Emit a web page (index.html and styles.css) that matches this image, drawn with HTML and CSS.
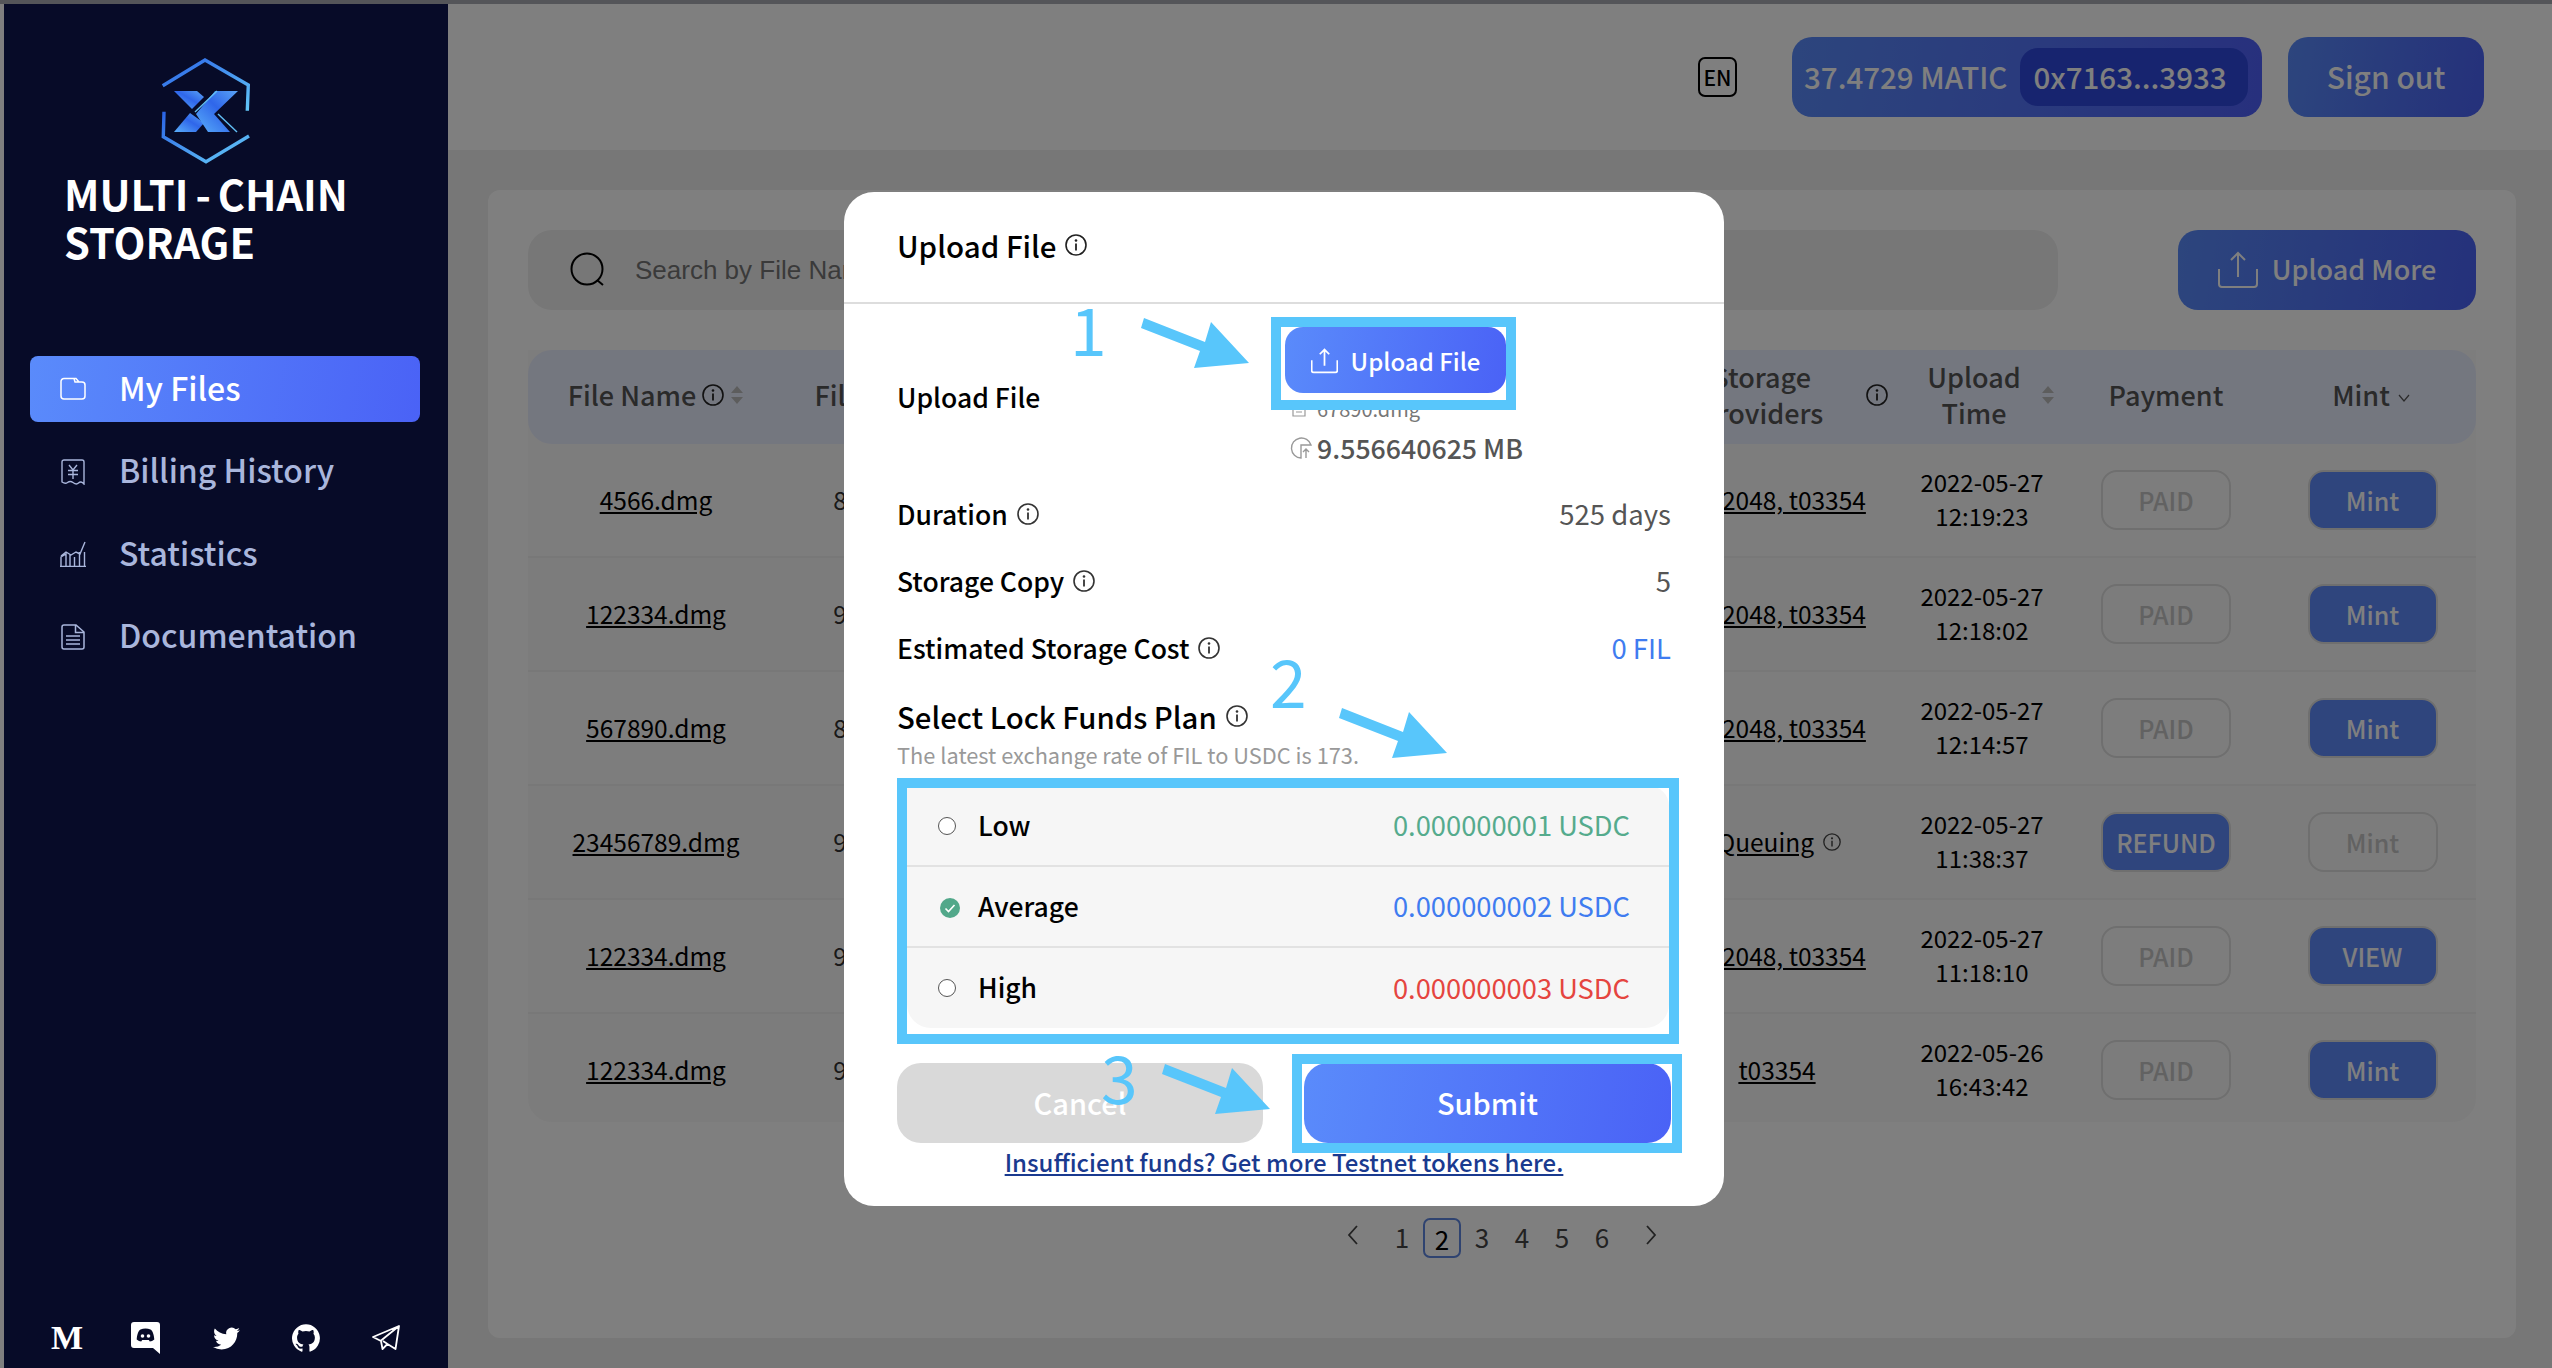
FILE: index.html
```html
<!DOCTYPE html>
<html lang="en">
<head>
<meta charset="utf-8">
<title>Multi-Chain Storage</title>
<link rel="stylesheet" href="styles.css">
</head>
<body>
<div class="topstrip"></div>
<div class="app">
  <aside class="sidebar">
    <div class="brand">
      <svg class="logo" viewBox="0 0 90 108" aria-hidden="true">
        <defs>
          <linearGradient id="lg1" x1="0" y1="0" x2="1" y2="1"><stop offset="0" stop-color="#2a63e6"/><stop offset="1" stop-color="#62c6f8"/></linearGradient>
          <linearGradient id="lg2" x1="0" y1="0" x2="1" y2="1"><stop offset="0" stop-color="#2a63e6"/><stop offset="1" stop-color="#66cdf8"/></linearGradient>
          <linearGradient id="lg3" x1="0" y1="1" x2="1" y2="0"><stop offset="0" stop-color="#5bb0fa"/><stop offset=".55" stop-color="#2f66ea"/><stop offset="1" stop-color="#5aa4f6"/></linearGradient>
        </defs>
        <polyline points="1.7,27.7 44,2 87.3,27 86.3,52.7" fill="none" stroke="url(#lg1)" stroke-width="3.4"/>
        <polyline points="3,53.7 2.3,78.7 45,103.7 88,78" fill="none" stroke="url(#lg2)" stroke-width="3.4"/>
        <g fill="url(#lg3)">
          <polygon points="13,33 36,33 43,39 31,51"/>
          <polygon points="13,74 35,74 43,65 29,55"/>
          <polygon points="54,33 77,33 53,56 69,74 47,74 35,56"/>
        </g>
        <g fill="none" stroke="#62bff5" stroke-width="1.4">
          <line x1="56" y1="33" x2="34" y2="54"/>
          <line x1="57" y1="56" x2="76" y2="74"/>
        </g>
      </svg>
      <div class="brand-name">MULTI<span class="dash">-</span>CHAIN<br>STORAGE</div>
    </div>
    <nav class="nav">
      <a class="nav-item active">
        <svg class="nav-ico" viewBox="0 0 26 26" fill="none" stroke="currentColor" stroke-width="1.5"><path d="M1 5.5a3 3 0 0 1 3-3h12l3 3.5h3a3 3 0 0 1 3 3v11a3 3 0 0 1-3 3H4a3 3 0 0 1-3-3zM14 2.5l1 3.5h7"/></svg>
        <span>My Files</span>
      </a>
      <a class="nav-item">
        <svg class="nav-ico" viewBox="0 0 26 26" fill="none" stroke="currentColor" stroke-width="1.4"><path d="M2 3a2 2 0 0 1 2-2h18a2 2 0 0 1 2 2v22c-2-2.500-4-2.500-5.500-1s-3.500 1-5.500-.5-3.500-1.500-5.500 0-4 .5-5.500-.5z"/><path d="M9 6l4 5 4-5M8 11.500h10M8 15.500h10M13 11v9"/></svg>
        <span>Billing History</span>
      </a>
      <a class="nav-item">
        <svg class="nav-ico" viewBox="0 0 26 26" fill="none" stroke="currentColor" stroke-width="1.4"><path d="M0 25.500h26M1 25v-9l5-3v12M10 25v-12M14.500 25v-9M19.500 25v-14M24.500 25v-14M1 15l5-4 5 3 5-3 4 2 5-12"/></svg>
        <span>Statistics</span>
      </a>
      <a class="nav-item">
        <svg class="nav-ico" viewBox="0 0 26 26" fill="none" stroke="currentColor" stroke-width="1.5"><path d="M2 3a2 2 0 0 1 2-2h12l8 7v15a2 2 0 0 1-2 2H4a2 2 0 0 1-2-2zM15.500 1v7.500H24M6 12h14M6 16h14M6 20h14"/></svg>
        <span>Documentation</span>
      </a>
    </nav>
    <div class="socials">
      <span class="medium">M</span>
      <svg class="soc-discord" viewBox="0 0 29 32"><path fill="#fff" d="M3 0h23a3 3 0 0 1 3 3v29l-7-6H3a3 3 0 0 1-3-3V3a3 3 0 0 1 3-3z"/><path fill="#070b28" d="M9.500 7.500c3-1.200 7-1.200 10 0 2 1 3.500 5 3.800 10-1.500 1.300-3 1.800-4.500 2l-1-1.500H11.200l-1 1.500c-1.500-.2-3-.7-4.500-2 .3-5 1.800-9 3.800-10z"/><circle cx="11.500" cy="14" r="1.800" fill="#fff"/><circle cx="17.500" cy="14" r="1.800" fill="#fff"/></svg>
      <svg class="soc-twitter" viewBox="0 0 24 24"><path fill="#fff" d="M23.950 4.570a10 10 0 0 1-2.820.78 4.960 4.960 0 0 0 2.160-2.720c-.95.550-2 .950-3.120 1.180a4.920 4.920 0 0 0-8.380 4.480C7.690 8.100 4.070 6.130 1.640 3.160a4.820 4.820 0 0 0-.67 2.480c0 1.710.87 3.210 2.190 4.100a4.900 4.900 0 0 1-2.230-.61v.06c0 2.390 1.700 4.380 3.950 4.830a5 5 0 0 1-2.210.08 4.940 4.940 0 0 0 4.600 3.420A9.870 9.870 0 0 1 0 19.540a14 14 0 0 0 7.560 2.210c9.050 0 14-7.500 14-13.980 0-.21 0-.42-.02-.63a9.940 9.940 0 0 0 2.410-2.570z"/></svg>
      <svg class="soc-github" viewBox="0 0 24 24"><path fill="#fff" d="M12 .3a12 12 0 0 0-3.800 23.380c.6.120.83-.26.83-.57L9 21.070c-3.340.72-4.040-1.610-4.040-1.610-.55-1.390-1.340-1.760-1.340-1.760-1.080-.74.09-.73.09-.73 1.200.09 1.840 1.240 1.840 1.240 1.070 1.830 2.800 1.300 3.490 1 .1-.78.42-1.310.76-1.610-2.670-.3-5.470-1.330-5.470-5.930 0-1.310.47-2.380 1.240-3.220-.14-.3-.54-1.520.1-3.180 0 0 1-.32 3.300 1.230a11.500 11.500 0 0 1 6 0c2.280-1.550 3.290-1.230 3.290-1.230.64 1.660.24 2.880.12 3.180a4.650 4.650 0 0 1 1.230 3.220c0 4.610-2.800 5.630-5.480 5.920.42.36.81 1.100.81 2.220l-.01 3.290c0 .31.2.69.82.57A12 12 0 0 0 12 .3z"/></svg>
      <svg class="soc-telegram" viewBox="0 0 28 26" fill="none" stroke="#fff" stroke-width="1.800" stroke-linejoin="round"><path d="M1 12L27 1l-3.500 23-8-5-5 5-1.500-8zM8.500 16L27 1M15.500 19L11 16"/></svg>
    </div>
  </aside>

  <main class="main">
    <header class="topbar">
      <span class="lang">EN</span>
      <div class="wallet"><span class="balance">37.4729 MATIC</span><span class="address">0x7163...3933</span></div>
      <button class="btn signout">Sign out</button>
    </header>
    <section class="card">
      <div class="toolbar">
        <div class="search">
          <svg class="search-ico" viewBox="0 0 36 36" fill="none" stroke="#000" stroke-width="2"><circle cx="17" cy="17" r="15.500"/><path d="M27 28l6 5"/></svg>
          <span class="placeholder">Search by File Name</span>
        </div>
        <button class="btn upload-more">
          <svg class="upload-ico-lg" viewBox="0 0 40 38" fill="none" stroke="currentColor" stroke-width="2"><path d="M20 26V2M13 9l7-7 7 7M1 18v15a3 3 0 0 0 3 3h32a3 3 0 0 0 3-3V18"/></svg>
          Upload More
        </button>
      </div>
      <div class="table">
        <div class="thead">
          <div class="th"><span>File Name</span><svg class="info" viewBox="0 0 22 22"><use href="#i-info"/></svg><svg class="sort" viewBox="0 0 14 20"><use href="#i-sort"/></svg></div>
          <div class="th th-size">File Size</div>
          <div class="th"></div>
          <div class="th th-providers"><span>Storage<br>Providers</span><svg class="info" viewBox="0 0 22 22"><use href="#i-info"/></svg></div>
          <div class="th th-time"><span>Upload<br>Time</span><svg class="sort" viewBox="0 0 14 20"><use href="#i-sort"/></svg></div>
          <div class="th">Payment</div>
          <div class="th th-mint">Mint<svg class="caret" viewBox="0 0 12 8" fill="none" stroke="currentColor" stroke-width="1.200"><path d="M1 1l5 6 5-6"/></svg></div>
        </div>
        <div class="row"><a class="name">4566.dmg</a><span class="size">8.3 MB</span><span></span><a class="prov long">t02048, t03354</a><span class="time">2022-05-27<br>12:19:23</span><span class="act off">PAID</span><span class="act on last">Mint</span></div>
        <div class="row"><a class="name">122334.dmg</a><span class="size">9.5 MB</span><span></span><a class="prov long">t02048, t03354</a><span class="time">2022-05-27<br>12:18:02</span><span class="act off">PAID</span><span class="act on last">Mint</span></div>
        <div class="row"><a class="name">567890.dmg</a><span class="size">8.3 MB</span><span></span><a class="prov long">t02048, t03354</a><span class="time">2022-05-27<br>12:14:57</span><span class="act off">PAID</span><span class="act on last">Mint</span></div>
        <div class="row"><a class="name">23456789.dmg</a><span class="size">9.5 MB</span><span></span><div class="queue"><a class="prov">Queuing</a><svg class="info-sm" viewBox="0 0 22 22"><use href="#i-info"/></svg></div><span class="time">2022-05-27<br>11:38:37</span><span class="act on">REFUND</span><span class="act off last">Mint</span></div>
        <div class="row"><a class="name">122334.dmg</a><span class="size">9.5 MB</span><span></span><a class="prov long">t02048, t03354</a><span class="time">2022-05-27<br>11:18:10</span><span class="act off">PAID</span><span class="act on last">VIEW</span></div>
        <div class="row"><a class="name">122334.dmg</a><span class="size">9.5 MB</span><span></span><a class="prov">t03354</a><span class="time">2022-05-26<br>16:43:42</span><span class="act off">PAID</span><span class="act on last">Mint</span></div>
      </div>
      <div class="pager">
        <svg class="chev chev-l" viewBox="0 0 12 20" fill="none" stroke="currentColor" stroke-width="1.800"><path d="M10 1L2 10l8 9"/></svg>
        <span class="pg">1</span><span class="pg cur">2</span><span class="pg">3</span><span class="pg">4</span><span class="pg">5</span><span class="pg">6</span>
        <svg class="chev chev-r" viewBox="0 0 12 20" fill="none" stroke="currentColor" stroke-width="1.800"><path d="M2 1l8 9-8 9"/></svg>
      </div>
    </section>
  </main>
</div>

<div class="overlay"></div>

<div class="modal">
  <div class="modal-head"><span>Upload File</span><svg class="info" viewBox="0 0 22 22"><use href="#i-info"/></svg></div>
  <div class="modal-body">
    <div class="upload-row">
      <div class="label upload-label">Upload File</div>
      <div class="upload-col">
        <button class="btn upload-btn">
          <svg class="upload-ico" viewBox="0 0 40 38" fill="none" stroke="currentColor" stroke-width="2.600"><path d="M20 26V2M13 9l7-7 7 7M1 18v15a3 3 0 0 0 3 3h32a3 3 0 0 0 3-3V18"/></svg>
          Upload File
        </button>
        <div class="file-line">
          <svg class="file-ico" viewBox="0 0 14 16" fill="none" stroke="#999" stroke-width="1.200"><path d="M1 1h12v14H1zM4 5h6M4 8h6M4 11h6"/></svg>
          <span>67890.dmg</span>
        </div>
        <div class="size-line">
          <svg class="size-ico" viewBox="0 0 22 24" fill="none" stroke="#999" stroke-width="1.400"><path d="M11 23A10 10 0 1 1 21 10H11zM16 23v-9M13 17l3-3 3 3"/></svg>
          <span>9.556640625 MB</span>
        </div>
      </div>
    </div>
    <div class="kv"><div class="label">Duration<svg class="info" viewBox="0 0 22 22"><use href="#i-info"/></svg></div><div class="val">525 days</div></div>
    <div class="kv"><div class="label">Storage Copy<svg class="info" viewBox="0 0 22 22"><use href="#i-info"/></svg></div><div class="val">5</div></div>
    <div class="kv"><div class="label">Estimated Storage Cost<svg class="info" viewBox="0 0 22 22"><use href="#i-info"/></svg></div><div class="val val-blue">0 FIL</div></div>
    <div class="plan-title">Select Lock Funds Plan<svg class="info" viewBox="0 0 22 22"><use href="#i-info"/></svg></div>
    <div class="plan-sub">The latest exchange rate of FIL to USDC is 173.</div>
    <div class="plans">
      <div class="plan"><span class="radio"></span><span class="plan-name">Low</span><span class="plan-val green">0.000000001 USDC</span></div>
      <div class="plan"><svg class="radio-on" viewBox="0 0 20 20"><circle cx="10" cy="10" r="10" fill="#52a88a"/><path d="M5.500 10.500l3 3 6-6.500" fill="none" stroke="#fff" stroke-width="1.600"/></svg><span class="plan-name">Average</span><span class="plan-val blue">0.000000002 USDC</span></div>
      <div class="plan"><span class="radio"></span><span class="plan-name">High</span><span class="plan-val red">0.000000003 USDC</span></div>
    </div>
    <div class="actions">
      <button class="cancel">Cancel</button>
      <button class="btn submit">Submit</button>
    </div>
    <a class="funds-link">Insufficient funds? Get more Testnet tokens here.</a>
  </div>

  <div class="mark mark-1"></div>
  <div class="mark mark-2"></div>
  <div class="mark mark-3"></div>
  <div class="num num-1">1</div>
  <div class="num num-2">2</div>
  <div class="num num-3">3</div>
  <svg class="arrows" viewBox="844 192 880 1014">
    <defs><polygon id="arrow" points="1144,318 1205,342 1211,322 1249,363 1194,368 1200,351 1141,328"/></defs>
    <use href="#arrow" fill="#58c6fb"/>
    <use href="#arrow" fill="#58c6fb" transform="translate(198 390)"/>
    <use href="#arrow" fill="#58c6fb" transform="translate(21 746)"/>
  </svg>
</div>

<svg class="sprites" aria-hidden="true">
  <symbol id="i-info" viewBox="0 0 22 22"><circle cx="11" cy="11" r="10" fill="none" stroke="currentColor" stroke-width="1.600"/><circle cx="11" cy="6.500" r="1.300" fill="currentColor"/><path d="M11 9.500v7" stroke="currentColor" stroke-width="1.800"/></symbol>
  <symbol id="i-sort" viewBox="0 0 14 20"><path d="M7 1l6 7H1zM7 19l-6-7h12z" fill="#bbb"/></symbol>
</svg>
</body>
</html>
```
FILE: styles.css
```css
* { box-sizing: border-box; }
html, body { margin: 0; padding: 0; height: 100%; }
body {
  width: 2552px;
  height: 1368px;
  overflow: hidden;
  background: #fff;
  font-family: "Noto Sans CJK SC", "Noto Sans", sans-serif;
  color: #000;
  position: relative;
}
button { font-family: inherit; border: 0; padding: 0; }

.topstrip { height: 4px; background: #a8aab2; }
.app { display: flex; height: 1364px; padding-left: 4px; }

/* Sidebar sits above the dimming overlay */
.sidebar {
  width: 444px;
  flex: none;
  background: #070b28;
  display: flex;
  flex-direction: column;
  position: relative;
  z-index: 2;
}
.brand { padding: 54px 0 0 60px; }
.logo { display: block; width: 90px; height: 108px; margin-left: 97px; }
.brand-name {
  margin-top: 3px;
  font-size: 41.500px;
  line-height: 48px;
  font-weight: 700;
  color: #fff;
  white-space: nowrap;
}
.dash { margin: 0 7px; }
.nav { margin: 91px 0 0 26px; width: 390px; display: flex; flex-direction: column; gap: 16.500px; }
.nav-item {
  height: 66px;
  display: flex;
  align-items: center;
  padding: 0 0 5px 30px;
  gap: 33px;
  border-radius: 8px;
  font-size: 32px;
  font-weight: 500;
  color: #a9b6dc;
}
.nav-item.active { color: #fff; background: linear-gradient(100deg, #5a8bfb, #4a62f6); }
.nav-ico { width: 26px; height: 26px; flex: none; margin-top: 5px; }

.socials { margin-top: auto; height: 46px; margin-bottom: 7px; padding-left: 47px; display: flex; align-items: center; }
.medium { font-family: "Liberation Serif", serif; font-weight: 700; font-size: 34px; line-height: 1; color: #fff; width: 29px; }
.soc-discord { width: 29px; height: 32px; margin-left: 51px; }
.soc-twitter { width: 27px; height: 27px; margin-left: 53px; }
.soc-github { width: 28px; height: 28px; margin-left: 52px; }
.soc-telegram { width: 28px; height: 26px; margin-left: 52px; }

/* Main area */
.main { flex: 1; background: #eee; display: flex; flex-direction: column; min-width: 0; }
.topbar {
  height: 146px;
  background: #fff;
  display: flex;
  align-items: center;
  justify-content: flex-end;
  padding: 0 68px 0 0;
  flex: none;
}
.lang {
  width: 39px;
  height: 40px;
  border: 2px solid #000;
  border-radius: 7px;
  font-size: 21px;
  font-weight: 500;
  display: flex;
  align-items: center;
  justify-content: center;
  margin-right: 55px;
}
.wallet {
  width: 470px;
  height: 80px;
  border-radius: 20px;
  background: linear-gradient(100deg, #5a8bfb, #4f60fb);
  display: flex;
  align-items: center;
  padding: 0 14px 0 12px;
  justify-content: space-between;
  color: #fff;
  font-size: 29.500px;
  font-weight: 500;
}
.address { width: 228px; height: 58px; border-radius: 18px; background: #2e48de; display: flex; align-items: center; justify-content: center; padding: 0 8px 3px 0; }
.balance { white-space: nowrap; padding-bottom: 3px; }
.btn { background: linear-gradient(100deg, #5a8bfb, #4a62f6); color: #fff; display: flex; align-items: center; justify-content: center; }
.signout { width: 196px; height: 80px; border-radius: 20px; margin-left: 26px; font-size: 30px; font-weight: 500; padding-bottom: 3px; }

.card {
  margin: 40px 36px 30px 40px;
  flex: 1;
  background: #fff;
  border-radius: 12px;
  padding: 40px 40px 0;
  display: flex;
  flex-direction: column;
}
.toolbar { display: flex; justify-content: space-between; height: 80px; flex: none; }
.search {
  width: 1530px;
  background: #efefef;
  border-radius: 24px;
  display: flex;
  align-items: center;
  padding-left: 42px;
}
.search-ico { width: 36px; height: 36px; }
.placeholder { margin-left: 29px; font-family: "Liberation Sans", sans-serif; font-size: 26px; color: #757575; }
.upload-more { width: 298px; border-radius: 20px; font-size: 27px; font-weight: 500; gap: 14px; padding-bottom: 4px; }
.upload-ico-lg { width: 40px; height: 38px; margin-top: 4px; }

.table { margin-top: 40px; background: #fbfbfb; border-radius: 0 0 24px 24px; }
.thead, .row {
  display: grid;
  grid-template-columns: 256px 152px 724px 234px 176px 192px 214px;
  align-items: center;
  justify-items: center;
}
.thead {
  height: 94px;
  background: #e9eeff;
  border-radius: 24px;
  font-size: 27px;
  line-height: 36px;
  font-weight: 500;
  color: #555;
  text-align: center;
  padding-bottom: 5px;
}
.th { display: flex; align-items: center; justify-content: center; }
.th .info { color: #222; margin-left: 6px; }
.info { width: 22px; height: 22px; flex: none; }
.sort { width: 14px; height: 20px; margin-left: 6px; flex: none; }
.th-size { padding-left: 14px; }
.th-providers { justify-self: stretch; justify-content: flex-start; padding-left: 40px; }
.th-providers .info { margin-left: 43px; }
.th-time { justify-self: stretch; padding-left: 18px; }
.th-time .sort { margin-left: 20px; }
.th-mint { padding-left: 4px; }
.caret { width: 12px; height: 8px; margin-left: 8px; margin-top: 6px; }

.row {
  height: 114px;
  border-bottom: 2px solid #f0f0f0;
  font-size: 24.500px;
  line-height: 34px;
  text-align: center;
}
.row:nth-of-type(odd) { background: #f9f9f9; }
.row:last-child { border-bottom: 0; border-radius: 0 0 24px 24px; height: 108px; padding-top: 4px; }
.name, .prov { text-decoration: underline; color: #000; white-space: nowrap; }
.prov.long { margin-left: 11px; }
.size { color: #333; padding-left: 22px; }
.queue { display: flex; align-items: center; gap: 9px; margin-left: 4px; }
.info-sm { width: 18px; height: 18px; color: #444; }
.time { color: #000; font-size: 24px; line-height: 34px; margin-top: -2px; }
.act {
  width: 130px;
  height: 60px;
  border-radius: 16px;
  display: flex;
  align-items: center;
  justify-content: center;
  font-size: 25px;
  font-weight: 500;
  border: 2px solid #dedede;
}
.act.off { color: #c4c4c4; }
.act.on { background: #5e8afb; color: #fff; }
.act.last { margin-left: 7px; }

.pager {
  margin-top: 94px;
  height: 40px;
  display: flex;
  align-items: center;
  font-size: 26px;
  color: #444;
  margin-left: 819px;
}
.chev { width: 12px; height: 20px; }
.chev-l { margin-right: 23px; margin-top: -2px; }
.chev-r { margin-left: 23px; margin-top: -2px; }
.pg { width: 40px; height: 40px; display: flex; align-items: center; justify-content: center; }
.pg.cur { width: 38px; margin: 4px 1px 0; border: 2px solid #5e86e0; border-radius: 7px; color: #000; }

/* Dim layer */
.overlay { position: absolute; inset: 0; background: rgba(0, 0, 0, .5); z-index: 1; }

/* Modal */
.modal {
  position: absolute;
  left: 844px;
  top: 192px;
  width: 880px;
  height: 1014px;
  background: #fff;
  border-radius: 30px;
  z-index: 3;
  overflow: hidden;
}
.modal-head {
  height: 112px;
  border-bottom: 2px solid #ddd;
  padding: 0 53px 4px;
  display: flex;
  align-items: center;
  font-size: 29.500px;
  font-weight: 500;
}
.modal-head .info { margin-left: 8px; color: #222; }
.modal-body { padding: 0 53px 0 53px; }
.label { font-size: 26.500px; font-weight: 500; display: flex; align-items: center; }
.label .info { margin-left: 9px; color: #333; }
.upload-row { height: 176px; display: flex; }
.upload-label { flex: 0 0 388px; align-self: flex-start; margin-top: 73px; line-height: 40px; }
.upload-col { padding-top: 23px; }
.upload-btn {
  width: 221px;
  height: 66px;
  border-radius: 18px;
  font-size: 24px;
  font-weight: 500;
  gap: 13px;
  padding-top: 1px;
}
.upload-ico { width: 27px; height: 26px; }
.file-line { height: 30px; margin-top: 1px; display: flex; align-items: center; gap: 11px; padding-left: 7px; font-size: 20px; color: #777; line-height: 1; }
.file-ico { width: 14px; height: 16px; }
.size-line { margin-top: 3px; height: 40px; display: flex; align-items: center; gap: 5px; padding-left: 5px; font-size: 26.700px; font-weight: 500; color: #555; white-space: nowrap; }
.size-ico { width: 22px; height: 24px; }
.kv { height: 67px; display: flex; align-items: center; justify-content: space-between; }
.val { font-size: 27.500px; color: #555; padding-bottom: 2px; }
.val-blue { color: #3f7cf0; }
.plan-title { height: 50px; margin-top: 10px; display: flex; align-items: center; font-size: 29.300px; font-weight: 500; }
.plan-title .info { margin-left: 9px; color: #333; }
.plan-sub { height: 30px; margin-top: -1px; font-size: 21.800px; line-height: 30px; color: #999; white-space: nowrap; }
.plans {
  margin: 16px 2px 0 10px;
  height: 242px;
  background: #f6f6f6;
  border-radius: 0 20px 24px 24px;
  overflow: hidden;
}
.plan {
  height: 81px;
  display: flex;
  align-items: center;
  padding: 0 39px 3px 31px;
  border-bottom: 2px solid #e2e2e2;
  font-size: 27.300px;
}
.plan:last-child { border-bottom: 0; height: 80px; }
.radio { width: 18px; height: 18px; border: 1.500px solid #555; border-radius: 50%; background: #fff; flex: none; margin-top: 3px; }
.radio-on { width: 20px; height: 20px; flex: none; margin-right: -4px; margin-left: 2px; margin-top: 6px; }
.plan-name { margin-left: 22px; font-weight: 500; font-size: 26.500px; }
.plan-val { margin-left: auto; }
.green { color: #55ab8d; }
.blue { color: #3f7cf0; }
.red { color: #e5453f; }
.actions { display: flex; justify-content: space-between; margin-top: 35px; padding-right: 0; }
.cancel { width: 366px; height: 80px; border-radius: 24px; background: #d9d9d9; color: #fff; font-size: 29px; font-weight: 500; padding-bottom: 2px; }
.submit { width: 367px; height: 80px; border-radius: 24px; font-size: 29px; font-weight: 500; padding-bottom: 2px; }
.funds-link {
  display: block;
  text-align: center;
  margin-top: 1px;
  font-size: 24px;
  line-height: 36px;
  font-weight: 500;
  color: #1a3a8f;
  text-decoration: underline;
}

/* Annotation marks painted over the modal */
.mark { position: absolute; border: 10px solid #58c6fb; }
.mark-1 { left: 427px; top: 125px; width: 245px; height: 93px; }
.mark-2 { left: 53px; top: 586px; width: 782px; height: 266px; }
.mark-3 { left: 448px; top: 862px; width: 390px; height: 99px; }
.num { position: absolute; font-size: 66px; line-height: 66px; font-weight: 400; color: #58c6fb; }
.num-1 { left: 226px; top: 102px; }
.num-2 { left: 426px; top: 454px; }
.num-3 { left: 257px; top: 850px; }
.arrows { position: absolute; left: 0; top: 0; width: 880px; height: 1014px; pointer-events: none; }
.sprites { position: absolute; width: 0; height: 0; }
```
